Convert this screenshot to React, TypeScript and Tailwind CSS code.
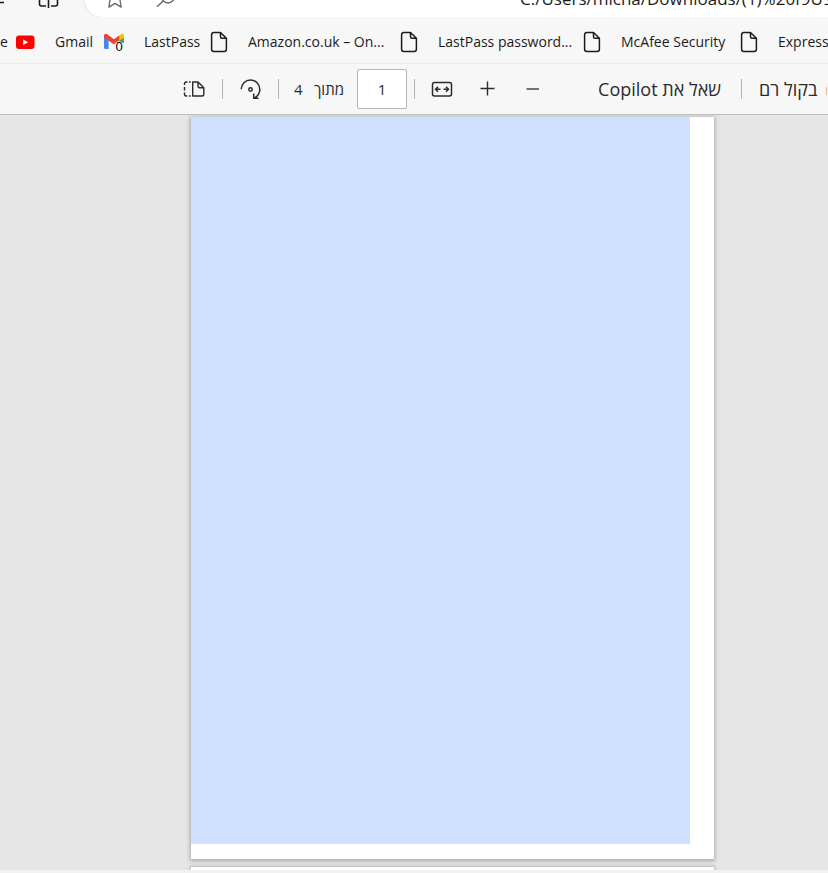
import type { ReactNode } from "react";

const fontStack = "font-['Open_Sans','Noto_Sans',sans-serif]";

function FileIcon() {
  return (
    <svg width="18" height="22" viewBox="1 0 18 22" fill="none" stroke="#1b1b1b" strokeWidth="1.5" strokeLinejoin="round" aria-hidden="true">
      <path d="M11.5 1.5H4.8A2.2 2.2 0 0 0 2.6 3.7v14.6a2.2 2.2 0 0 0 2.2 2.2h10.4a2.2 2.2 0 0 0 2.2-2.2V7.3L11.5 1.5v4.3a1.5 1.5 0 0 0 1.5 1.5h4.4" />
    </svg>
  );
}

function YouTubeIcon() {
  return (
    <svg width="20" height="20" viewBox="0 0 20 20" aria-hidden="true">
      <rect x="1" y="3.5" width="18.500" height="13.500" rx="3" fill="#f00" />
      <path d="M8.200 7.500v5.500l5-2.750z" fill="#fff" />
    </svg>
  );
}

function GmailIcon() {
  return (
    <span className="relative block h-5 w-5">
      <svg width="20" height="20" viewBox="0 0 20 20" aria-hidden="true">
        <path d="M0 4v11.5c0 .8.6 1.5 1.4 1.5h3.2V8z" fill="#4285f4" />
        <path d="M15.4 8v3H20V4z" fill="#34a853" />
        <path d="M15.4 4v4.500L20 6V4c0-2-2-2.800-3.400-1.600z" fill="#fbbc04" />
        <path d="M0 4c0-2 2-2.800 3.500-1.600L10 7.300l5.400-4.100v5.300L10 12.600 0 5.500z" fill="#ea4335" />
      </svg>
      <span className="absolute right-0 -bottom-px w-2.5 text-center font-['Liberation_Sans',sans-serif] text-[13px] leading-3 text-black [text-shadow:0_0_2px_#fff,1px_0_1px_#fff,-1px_0_1px_#fff]">
        0
      </span>
    </span>
  );
}

function Bookmark({ label, width, icon }: { label: string; width: string; icon: ReactNode }) {
  return (
    <a href="#" className="flex shrink-0 items-center gap-3">
      <span className={`whitespace-nowrap ${width}`}>{label}</span>
      {icon}
    </a>
  );
}

function Divider() {
  return <span className="h-5 w-px shrink-0 bg-[#b5b5b5]" />;
}

function AddressRow() {
  return (
    <div className="flex h-[17px] items-end overflow-hidden">
      <div className="flex h-[34px] w-[85px] shrink-0 items-center">
        <button aria-label="Forward" className="w-9">
          <svg width="36" height="34" viewBox="0 0 36 34" fill="none" stroke="#1b1b1b" strokeWidth="1.5" aria-hidden="true">
            <path d="M0 19.500h4" />
          </svg>
        </button>
        <button aria-label="Split screen">
          <svg width="26" height="34" viewBox="0 0 26 34" fill="none" stroke="#1b1b1b" strokeWidth="1.600" aria-hidden="true">
            <path d="M12.500 10H5.500a2 2 0 0 0-2 2v9a2 2 0 0 0 2 2h4.500M12.500 10H19.500a2 2 0 0 1 2 2v9a2 2 0 0 1-2 2h-4.500M12.500 8v17" />
          </svg>
        </button>
      </div>
      <div className="flex h-[34px] min-w-0 flex-1 items-center rounded-l-full bg-white shadow-[0_0_3px_#d8d8d8]">
        <button aria-label="Add to favourites" className="ml-5 shrink-0">
          <svg width="20" height="34" viewBox="0 0 20 34" fill="none" stroke="#666" strokeWidth="1.300" strokeLinejoin="round" aria-hidden="true">
            <path d="M10 7l2.500 5.500 6 .600-3.500 4 1.200 7-6.200-3.700-6.200 3.700 1.200-7-3.500-4 6-.6z" />
          </svg>
        </button>
        <button aria-label="Search" className="ml-[30px] shrink-0">
          <svg width="20" height="34" viewBox="0 0 20 34" fill="none" stroke="#666" strokeWidth="1.400" aria-hidden="true">
            <circle cx="13" cy="13.500" r="6.500" />
            <path d="M8.200 18L2 23.800" />
          </svg>
        </button>
        <input
          aria-label="Address"
          readOnly
          dir="ltr"
          defaultValue="C:/Users/micha/Downloads/(1)%20f9U9"
          className="-mt-1 ml-[345px] h-[34px] min-w-0 flex-1 bg-transparent text-[17px] text-[#1b1b1b] outline-none"
        />
      </div>
    </div>
  );
}

function BookmarksBar() {
  return (
    <nav aria-label="Favourites" className="flex h-[47px] items-center gap-5 overflow-hidden border-b border-[#ebebeb] pt-1 text-[14px] leading-5 text-[#1b1b1b]">
      <Bookmark label="e" width="w-[3px]" icon={<YouTubeIcon />} />
      <Bookmark label="Gmail" width="w-[37px]" icon={<GmailIcon />} />
      <Bookmark label="LastPass" width="w-[54px]" icon={<FileIcon />} />
      <Bookmark label="Amazon.co.uk – On..." width="w-[140px]" icon={<FileIcon />} />
      <Bookmark label="LastPass password..." width="w-[133px]" icon={<FileIcon />} />
      <Bookmark label="McAfee Security" width="w-[107px]" icon={<FileIcon />} />
      <a href="#" className="shrink-0">Express</a>
    </nav>
  );
}

function PdfToolbar() {
  return (
    <div role="toolbar" aria-label="PDF" className="flex h-[51px] items-center overflow-hidden border-b border-[#bdbdbd] pl-[183px] text-[#2b2b2b]">
      <button aria-label="Page view" className="shrink-0">
        <svg width="22" height="20" viewBox="0 0 22 20" fill="none" stroke="#2b2b2b" strokeWidth="1.400" strokeLinejoin="round" aria-hidden="true">
          <path d="M15 3H9.700v14H19a1.800 1.800 0 0 0 1.800-1.800V8.800L15 3v4.300a1.500 1.500 0 0 0 1.500 1.500h4.300" />
          <path d="M7.700 3H6M4.500 3H3.300A1.800 1.800 0 0 0 1.500 4.800V6M1.500 8v3.500M1.500 13.500v1.700A1.800 1.800 0 0 0 3.300 17h1M6 17h1.700" />
        </svg>
      </button>
      <span className="ml-[17px] flex"><Divider /></span>
      <button aria-label="Rotate" className="ml-4 shrink-0">
        <svg width="24" height="24" viewBox="0 0 24 24" fill="none" stroke="#2b2b2b" strokeWidth="1.500" aria-hidden="true">
          <path d="M2.200 12.200A9.300 9.300 0 0 1 11.500 3a9.300 9.300 0 0 1 9.300 9.300c0 3.700-2 6.900-5.300 8.700M14.700 16.500v4.800h4.800" />
          <circle cx="11.500" cy="12.500" r="1.700" />
        </svg>
      </button>
      <span className="ml-[15px] flex"><Divider /></span>
      <label htmlFor="page" dir="rtl" className="ml-[15px] flex w-[50px] shrink-0 justify-between text-[15px] leading-5 whitespace-nowrap">
        <span>מתוך</span>
        <span>4</span>
      </label>
      <input
        id="page"
        defaultValue="1"
        className="ml-[13px] h-10 w-[50px] shrink-0 rounded-xs border border-[#b5b5b5] bg-white text-center text-[15px] outline-none"
      />
      <span className="ml-[7px] flex"><Divider /></span>
      <button aria-label="Fit to width" className="ml-4 shrink-0">
        <svg width="22" height="20" viewBox="0 0 22 20" fill="none" stroke="#2b2b2b" strokeWidth="1.500" aria-hidden="true">
          <rect x="1.500" y="3.500" width="19" height="13.500" rx="2" />
          <path d="M9.500 10.200H4.500M7 7.700L4.500 10.200 7 12.700M12.500 10.200h5M15 7.700l2.500 2.500-2.500 2.500" />
        </svg>
      </button>
      <button aria-label="Zoom in" className="ml-6 shrink-0">
        <svg width="20" height="20" viewBox="0 0 20 20" stroke="#2b2b2b" strokeWidth="1.400" aria-hidden="true">
          <path d="M3.500 9.500h14M10.500 2.500v14" />
        </svg>
      </button>
      <button aria-label="Zoom out" className="ml-[25px] shrink-0">
        <svg width="20" height="20" viewBox="0 0 20 20" stroke="#5a5a5a" strokeWidth="1.700" aria-hidden="true">
          <path d="M4.500 10h12.500" />
        </svg>
      </button>
      <button dir="rtl" className="ml-[55px] w-[124px] shrink-0 text-start text-[18px] leading-6 whitespace-nowrap">
        שאל את Copilot
      </button>
      <span className="ml-5 flex"><Divider /></span>
      <button className="ml-[17px] flex shrink-0 gap-1 text-[18px] leading-6 whitespace-nowrap">
        <span dir="rtl">בקול רם</span>
        <svg width="12" height="24" viewBox="0 0 12 24" aria-hidden="true">
          <path d="M5.500 18V10" stroke="#eac98a" strokeWidth="1.500" />
        </svg>
      </button>
    </div>
  );
}

export default function App() {
  return (
    <div className={`flex min-h-screen flex-col overflow-hidden bg-[#f7f7f7] ${fontStack}`}>
      <header>
        <AddressRow />
        <BookmarksBar />
        <PdfToolbar />
      </header>
      <main className="flex flex-1 flex-col gap-2 overflow-hidden bg-[#e6e6e6] pt-0.5 pr-[114px] pl-[191px]">
        <section aria-label="Page 1" className="flex flex-1 bg-white pr-6 pb-[15px] shadow-[0_1px_4px_1px_#a8a8a8]">
          <div className="flex-1 bg-[#d0e0ff]" />
        </section>
        <section aria-label="Page 2" className="h-[3px] bg-white shadow-[0_0_3px_1px_#b5b5b5]" />
      </main>
      <footer className="h-[3px] bg-[#f2f2f2]" />
    </div>
  );
}
